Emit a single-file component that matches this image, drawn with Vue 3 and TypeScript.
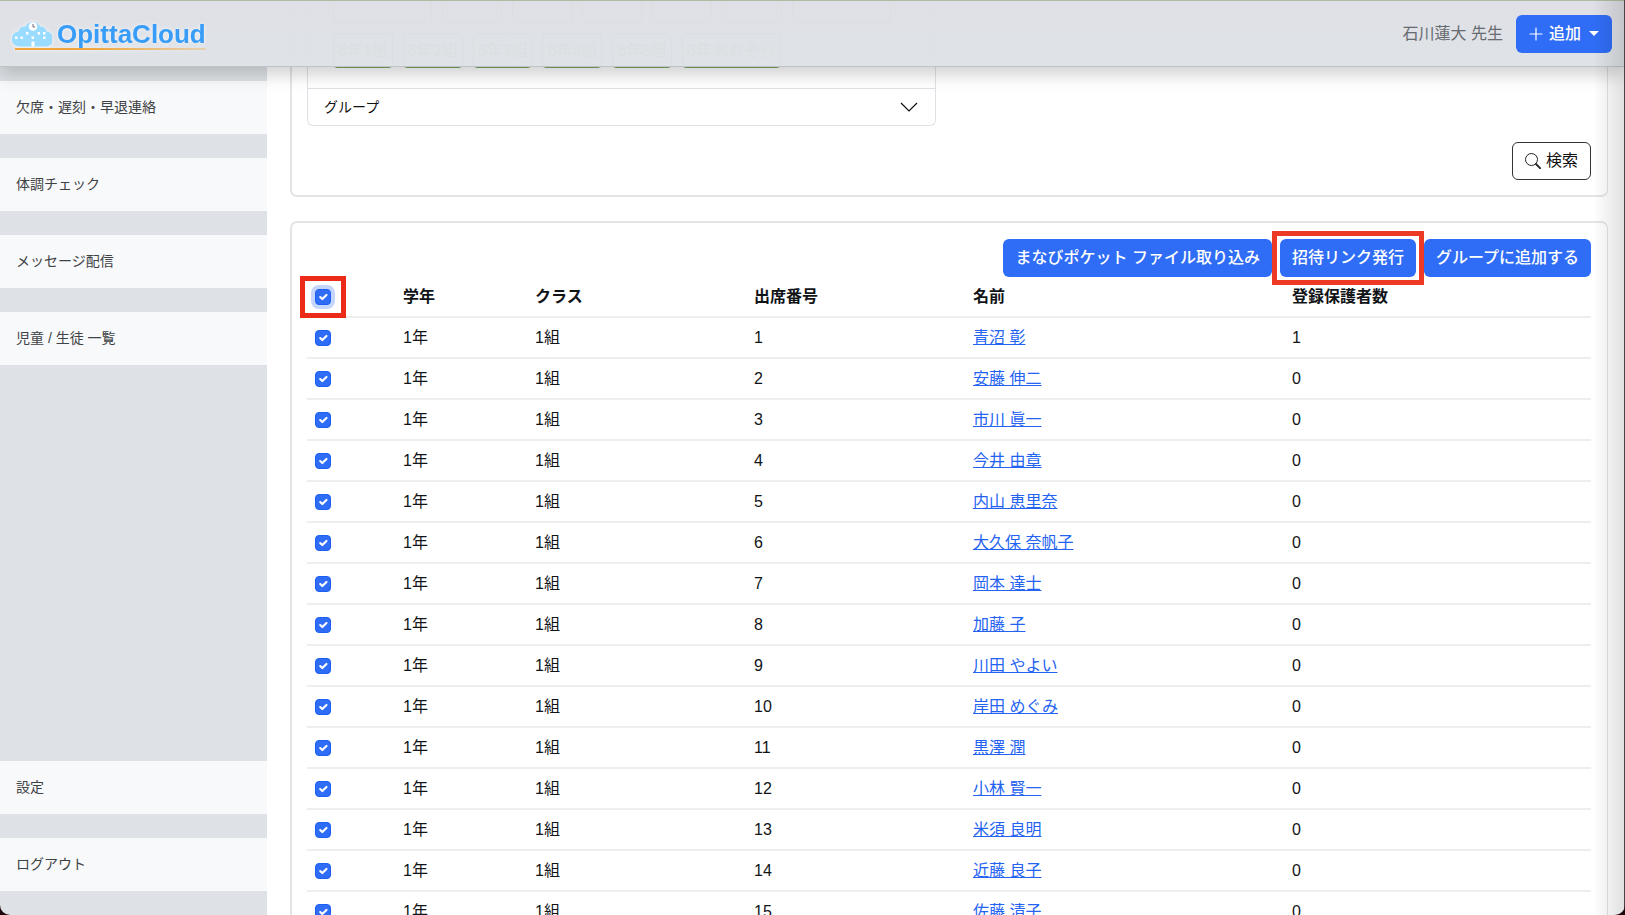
<script setup lang="ts">
import { ref } from 'vue'

interface Student { no: number; name: string; guardians: number; checked: boolean }

const names: string[] = [
  '青沼 彰', '安藤 伸二', '市川 眞一', '今井 由章', '内山 恵里奈', '大久保 奈帆子', '岡本 達士', '加藤 子',
  '川田 やよい', '岸田 めぐみ', '黒澤 潤', '小林 賢一', '米須 良明', '近藤 良子', '佐藤 清子',
]
const students = ref<Student[]>(names.map((name, i) => ({ no: i + 1, name, guardians: i === 0 ? 1 : 0, checked: true })))
const allChecked = ref(true)
const toggleAll = () => students.value.forEach((s) => { s.checked = allChecked.value })

const menu: string[] = ['欠席・遅刻・早退連絡', '体調チェック', 'メッセージ配信', '児童 / 生徒 一覧']
const footerMenu: string[] = ['設定', 'ログアウト']
const classes: string[] = ['6年1組', '6年2組', '6年3組', '6年4組', '6年5組', '6年あおぞら']
</script>

<template>
  <div class="app">
    <header class="topbar">
      <a href="#" class="brand" aria-label="OpittaCloud">
        <svg class="cloud" viewBox="0 0 40 28" aria-hidden="true">
          <path d="M8 26.500a7.500 7.500 0 0 1-1.500-15a6 6 0 0 1 7-5a8 8 0 0 1 14.500 0a6.500 6.500 0 0 1 6.500 5a7.500 7.500 0 0 1-1.500 15z" fill="#9adcff" />
          <circle cx="21" cy="6.500" r="4.300" fill="#fff" />
          <path d="M21 4v3h2" fill="none" stroke="#667" stroke-width="1" />
          <path d="M3 16.500h2.500v2.500H3zM8.500 16.500H11v2.500H8.500zM14 12h2.500v2.500H14zM19.500 16.500H22v2.500h-2.500zM25.500 12H28v2.500h-2.500zM31 12h2.500v2.500H31zM31 16.500h2.500v2.500H31zM19.500 21.500h3v5h-3z" fill="#fff" />
        </svg>
        <span class="brand-name">OpittaCloud</span>
      </a>
      <div class="account">
        <span class="user">石川蓮大 先生</span>
        <button type="button" class="btn primary add">
          <svg width="14" height="14" viewBox="0 0 14 14" aria-hidden="true"><path d="M7 1v12M1 7h12" stroke="#fff" stroke-width="1.200" stroke-linecap="round" /></svg>
          <span>追加</span>
          <svg width="10" height="5" viewBox="0 0 10 5" aria-hidden="true"><path d="M0 0h10L5 5z" fill="#fff" /></svg>
        </button>
      </div>
    </header>

    <nav class="sidebar">
      <a v-for="m in menu" :key="m" href="#">{{ m }}</a>
      <span class="spacer"></span>
      <a v-for="m in footerMenu" :key="m" href="#">{{ m }}</a>
    </nav>

    <main class="content">
      <section class="card search">
        <div class="accordion">
          <div class="classes">
            <div class="class-row clipped" aria-hidden="true"><i class="wide"></i><i v-for="n in 5" :key="n"></i><i class="wide"></i></div>
            <div class="class-row">
              <button v-for="c in classes" :key="c" type="button" class="class-btn">{{ c }}</button>
            </div>
          </div>
          <button type="button" class="group">
            <span>グループ</span>
            <svg width="18" height="10" viewBox="0 0 18 10" aria-hidden="true"><path d="M1 1l8 8l8-8" fill="none" stroke="#111" stroke-width="1.200" /></svg>
          </button>
        </div>
        <button type="button" class="btn outline">
          <svg width="16" height="16" viewBox="0 0 16 16" aria-hidden="true"><circle cx="6.500" cy="6.500" r="6" fill="none" stroke="#222" /><path d="M11 11l4.300 4.300" stroke="#222" stroke-width="1.800" stroke-linecap="round" /></svg>
          <span>検索</span>
        </button>
      </section>

      <section class="card list">
        <div class="actions">
          <button type="button" class="btn primary">まなびポケット ファイル取り込み</button>
          <button type="button" class="btn primary framed">招待リンク発行</button>
          <button type="button" class="btn primary">グループに追加する</button>
        </div>
        <table>
          <colgroup><col class="c-check" /><col class="c-grade" /><col class="c-class" /><col class="c-no" /><col class="c-name" /><col class="c-count" /></colgroup>
          <thead>
            <tr>
              <th><span class="check-all"><input v-model="allChecked" type="checkbox" aria-label="すべて選択" @change="toggleAll" /></span></th>
              <th>学年</th><th>クラス</th><th>出席番号</th><th>名前</th><th>登録保護者数</th>
            </tr>
          </thead>
          <tbody>
            <tr v-for="s in students" :key="s.no">
              <td><input v-model="s.checked" type="checkbox" :aria-label="s.name" /></td>
              <td>1年</td><td>1組</td><td>{{ s.no }}</td><td><a href="#">{{ s.name }}</a></td><td>{{ s.guardians }}</td>
            </tr>
          </tbody>
        </table>
      </section>
    </main>
    <div class="edge"></div>
    <div class="corners"></div>
  </div>
</template>

<style>
html, body { margin: 0; overflow: hidden; }
</style>

<style scoped>
.app {
  position: relative;
  display: grid;
  grid-template-columns: 267px minmax(0, 1fr);
  grid-template-rows: 67px minmax(0, 1fr);
  height: 100vh;
  overflow: hidden;
  background: #fff;
  color: #111417;
  font-family: "Liberation Sans", "Noto Sans CJK JP", sans-serif;
  font-size: 16px;
  line-height: 24px;
}
* { box-sizing: border-box; }
button, input { font: inherit; margin: 0; }
button { cursor: pointer; }

.topbar {
  grid-column: 1 / 3;
  grid-row: 1;
  z-index: 2;
  display: flex;
  align-items: center;
  justify-content: space-between;
  padding: 0 13px 0 12px;
  background: linear-gradient(rgba(222, 223, 230, .97), rgba(221, 226, 230, .96));
  border-top: 1px solid #aebda0;
  border-bottom: 1px solid #bfc3c7;
  box-shadow: 0 8px 16px rgba(0, 0, 0, .18);
}
.brand {
  display: flex;
  align-items: center;
  gap: 5px;
  padding: 2px 0 1px;
  text-decoration: none;
  color: #389df8;
  background: linear-gradient(90deg, #f0a63c, #f0a63c 40%, rgba(240, 166, 60, .3)) 3px 100% / 100% 2px no-repeat;
  filter: drop-shadow(0 0 2px rgba(255, 255, 255, .7));
}
.cloud { width: 40px; height: 28px; }
.brand-name { font-size: 26px; font-weight: 700; line-height: 30px; }
.account { display: flex; align-items: center; gap: 13px; }
.user { color: #686b6f; }

.btn {
  height: 38px;
  padding: 0 12px;
  border: 0;
  border-radius: 6px;
  display: inline-flex;
  align-items: center;
  white-space: nowrap;
}
.primary { background: #306df6; color: #fff; font-weight: 500; }
.add { gap: 6px; padding: 0 13px; }
.add span { margin-right: 2px; }
.outline { background: #fff; color: #111; border: 1px solid #333; gap: 5px; }

.sidebar {
  grid-column: 1;
  grid-row: 2;
  display: flex;
  flex-direction: column;
  gap: 24px;
  padding: 14px 0 24px;
  background: #dee2e6;
}
.sidebar a {
  flex: none;
  height: 53px;
  padding: 0 16px;
  background: #f8f9fa;
  color: #3f4245;
  font-size: 14px;
  line-height: 53px;
  text-decoration: none;
}
.spacer { flex: 1; }

.content {
  grid-column: 2;
  grid-row: 1 / 3;
  display: flex;
  flex-direction: column;
  gap: 24px;
  padding: 0 17px 0 23px;
}
.card { flex: none; border: 2px solid #e4e4e5; border-right-width: 1px; border-radius: 7px; }
.search {
  display: flex;
  flex-direction: column;
  align-items: flex-end;
  gap: 16px;
  padding: 0 16px 15px 15px;
  border-top: 0;
  border-radius: 0 0 7px 7px;
}
.accordion {
  align-self: flex-start;
  width: 49%;
  border: 1px solid #dee2e6;
  border-top: 0;
  border-radius: 0 0 6px 6px;
}
.classes { display: flex; flex-direction: column; gap: 10px; height: 88px; padding: 0 25px; }
.class-row { display: flex; gap: 10px; }
.clipped { height: 23px; }
.clipped i { width: 60px; border: 1px solid #7aa764; border-top: 0; border-radius: 0 0 4px 4px; }
.clipped .wide { width: 99px; }
.class-btn {
  height: 35px;
  padding: 0 4px;
  border: 1px solid #7aa764;
  border-radius: 4px;
  background: #fff;
  color: #7aa764;
  white-space: nowrap;
}
.group {
  display: flex;
  align-items: center;
  justify-content: space-between;
  width: 100%;
  height: 37px;
  padding: 0 17px 0 16px;
  border: 0;
  border-top: 1px solid #dee2e6;
  background: none;
  color: #111;
  font-size: 14px;
}

.list { padding: 16px 16px 16px 15px; }
.actions { display: flex; justify-content: flex-end; gap: 8px; }
.framed { position: relative; }
.framed::after { content: ""; position: absolute; inset: -8px; border: 5px solid #ec3a24; }
table { width: 100%; table-layout: fixed; border-collapse: separate; border-spacing: 0; }
.c-check { width: 88px; }
.c-grade { width: 132px; }
.c-class { width: 219px; }
.c-no { width: 219px; }
.c-name { width: 319px; }
.c-count { width: 307px; }
th, td { height: 41px; padding: 0 8px; border-bottom: 2px solid #eee; text-align: left; white-space: nowrap; }
th { font-weight: 700; }
td a { color: #2463f2; text-decoration: underline; }
input[type="checkbox"] {
  appearance: none;
  display: block;
  width: 16px;
  height: 16px;
  border: 1px solid #1d5ff5;
  border-radius: 4px;
  background: #fff;
}
input[type="checkbox"]:checked {
  background: #306df6 url("data:image/svg+xml,%3Csvg xmlns='http://www.w3.org/2000/svg' viewBox='0 0 20 20'%3E%3Cpath fill='none' stroke='%23fff' stroke-linecap='round' stroke-linejoin='round' stroke-width='3' d='m6 10 3 3 6-6'/%3E%3C/svg%3E") center / contain no-repeat;
}
.check-all { position: relative; display: block; width: 16px; }
.check-all input { box-shadow: 0 0 0 4px #c5d5fc; }
.check-all::after { content: ""; position: absolute; inset: -13px -15px; border: 5px solid #ec2a18; pointer-events: none; }

.edge {
  position: absolute;
  z-index: 3;
  inset: 0 0 0 auto;
  width: 32px;
  border-right: 1px solid #4a4648;
  background: linear-gradient(90deg, transparent, rgba(0, 0, 0, .12));
  pointer-events: none;
}
.corners {
  position: absolute;
  z-index: 4;
  inset: auto 0 0;
  height: 24px;
  overflow: hidden;
  pointer-events: none;
}
.corners::before { content: ""; position: absolute; inset: 0; border-radius: 0 0 10px 10px; box-shadow: 0 0 0 12px #1c060c; }
</style>
